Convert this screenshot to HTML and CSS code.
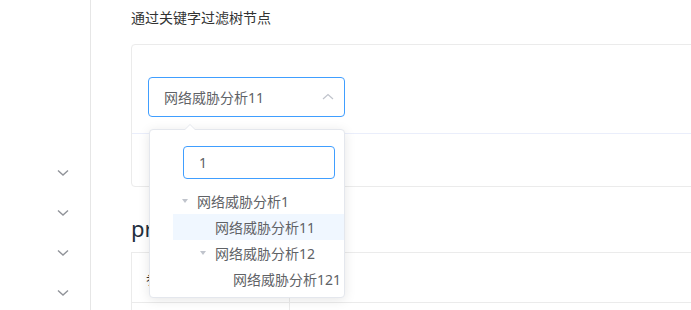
FILE: index.html
```html
<!DOCTYPE html>
<html lang="zh-CN">
<head>
    <meta charset="UTF-8">
    <meta name="viewport" content="width=device-width, initial-scale=1.0">
    <title>Tree 树形控件</title>
    <link rel="stylesheet" href="styles.css">
</head>
<body>
    <div class="page">
        <aside class="sidebar">
            <div class="nav-item">
                <svg width="12" height="8" viewBox="0 0 12 8"><path d="M1 1.5 L6 6 L11 1.5" fill="none" stroke="#909399" stroke-width="1.4"/></svg>
            </div>
            <div class="nav-item">
                <svg width="12" height="8" viewBox="0 0 12 8"><path d="M1 1.5 L6 6 L11 1.5" fill="none" stroke="#909399" stroke-width="1.4"/></svg>
            </div>
            <div class="nav-item">
                <svg width="12" height="8" viewBox="0 0 12 8"><path d="M1 1.5 L6 6 L11 1.5" fill="none" stroke="#909399" stroke-width="1.4"/></svg>
            </div>
            <div class="nav-item">
                <svg width="12" height="8" viewBox="0 0 12 8"><path d="M1 1.5 L6 6 L11 1.5" fill="none" stroke="#909399" stroke-width="1.4"/></svg>
            </div>
        </aside>

        <main class="content">
            <p class="hint">通过关键字过滤树节点</p>

            <div class="demo">
                <div class="demo-source">
                    <div class="select-wrap">
                        <div class="select">
                            <span class="select-value">网络威胁分析11</span>
                            <svg class="select-arrow" width="14" height="14" viewBox="0 0 14 14"><path d="M2 9 L7 4.5 L12 9" fill="none" stroke="#c0c4cc" stroke-width="1.2"/></svg>
                        </div>

                        <div class="dropdown">
                            <span class="popper-arrow"></span>
                            <div class="filter-input">1</div>
                            <div class="tree">
                                <div class="tree-row">
                                    <span class="expand"><i class="caret"></i></span>
                                    <span>网络威胁分析1</span>
                                </div>
                                <div class="tree-row level-2 current">
                                    <span class="expand"></span>
                                    <span>网络威胁分析11</span>
                                </div>
                                <div class="tree-row level-2">
                                    <span class="expand"><i class="caret"></i></span>
                                    <span>网络威胁分析12</span>
                                </div>
                                <div class="tree-row level-3">
                                    <span class="expand"></span>
                                    <span>网络威胁分析121</span>
                                </div>
                            </div>
                        </div>
                    </div>
                </div>
                <div class="demo-control"></div>
            </div>

            <h3 class="section-title">props</h3>
            <table class="attr-table">
                <thead>
                    <tr>
                        <th class="col-name">参数</th>
                        <th>说明</th>
                    </tr>
                </thead>
                <tbody>
                    <tr>
                        <td class="col-name">label</td>
                        <td>指定节点标签为节点对象的某个属性值</td>
                    </tr>
                </tbody>
            </table>
        </main>
    </div>
</body>
</html>
```

FILE: styles.css
```css
body {
    margin: 0;
    padding: 0;
    overflow: hidden;
    background-color: #ffffff;
    font-family: "Noto Sans", "Noto Sans CJK SC", sans-serif;
    font-size: 14px;
    color: #606266;
}

.page {
    display: flex;
    height: 310px;
}

.sidebar {
    flex: none;
    width: 90px;
    padding-top: 153px;
    border-right: 1px solid #e6e6e6;
}

.nav-item {
    height: 40px;
    display: flex;
    align-items: center;
    justify-content: flex-end;
    padding-right: 21px;
}

.content {
    flex: none;
    width: 760px;
    padding: 8px 0 0 40px;
}

.hint {
    margin: 0 0 16px;
    line-height: 20px;
    color: #333333;
}

.demo {
    border: 1px solid #ebebeb;
    border-radius: 4px;
}

.demo-source {
    padding: 32px 16px 16px;
}

.demo-control {
    height: 52px;
    border-top: 1px solid #eaeefb;
}

.select-wrap {
    position: relative;
    width: 197px;
}

.select {
    box-sizing: border-box;
    height: 40px;
    display: flex;
    align-items: center;
    justify-content: space-between;
    padding: 0 9px 0 15px;
    border: 1px solid #409eff;
    border-radius: 4px;
}

.select-value {
    color: #606266;
}

.dropdown {
    position: absolute;
    top: calc(100% + 12px);
    left: 1px;
    z-index: 10;
    box-sizing: border-box;
    width: 196px;
    padding: 16px 0 5px;
    background-color: #ffffff;
    border: 1px solid #e4e7ed;
    border-radius: 4px;
    box-shadow: 0 2px 12px rgba(0, 0, 0, 0.1);
}

.popper-arrow {
    position: absolute;
    top: -6px;
    left: 34px;
    width: 0;
    height: 0;
    border-left: 6px solid transparent;
    border-right: 6px solid transparent;
    border-bottom: 6px solid #e4e7ed;
}

.popper-arrow::after {
    content: "";
    position: absolute;
    top: 1px;
    left: -6px;
    border-left: 6px solid transparent;
    border-right: 6px solid transparent;
    border-bottom: 6px solid #ffffff;
}

.filter-input {
    box-sizing: border-box;
    width: 152px;
    height: 33px;
    margin-left: 33px;
    padding-left: 15px;
    line-height: 31px;
    border: 1px solid #409eff;
    border-radius: 4px;
    color: #606266;
}

.tree {
    margin: 9px 0 0 23px;
}

.tree-row {
    height: 26px;
    display: flex;
    align-items: center;
    white-space: nowrap;
}

.tree-row.level-2 {
    padding-left: 18px;
}

.tree-row.level-3 {
    padding-left: 36px;
}

.tree-row.current {
    background-color: #f0f7ff;
}

.expand {
    flex: none;
    width: 12px;
    height: 12px;
    padding: 6px;
    display: flex;
    align-items: center;
    justify-content: center;
}

.caret {
    width: 0;
    height: 0;
    border-left: 3.5px solid transparent;
    border-right: 3.5px solid transparent;
    border-top: 4px solid #c0c4cc;
}

.section-title {
    margin: 27px 0 10px;
    font-size: 22px;
    font-weight: 400;
    line-height: 28px;
    color: #1f2f3d;
}

.attr-table {
    width: 100%;
    border-collapse: collapse;
    font-size: 14px;
    color: #333333;
}

.attr-table th,
.attr-table td {
    height: 49px;
    padding: 0 14px;
    border: 1px solid #ebebeb;
    text-align: left;
    font-weight: 400;
}

.attr-table .col-name {
    width: 129px;
}
```
